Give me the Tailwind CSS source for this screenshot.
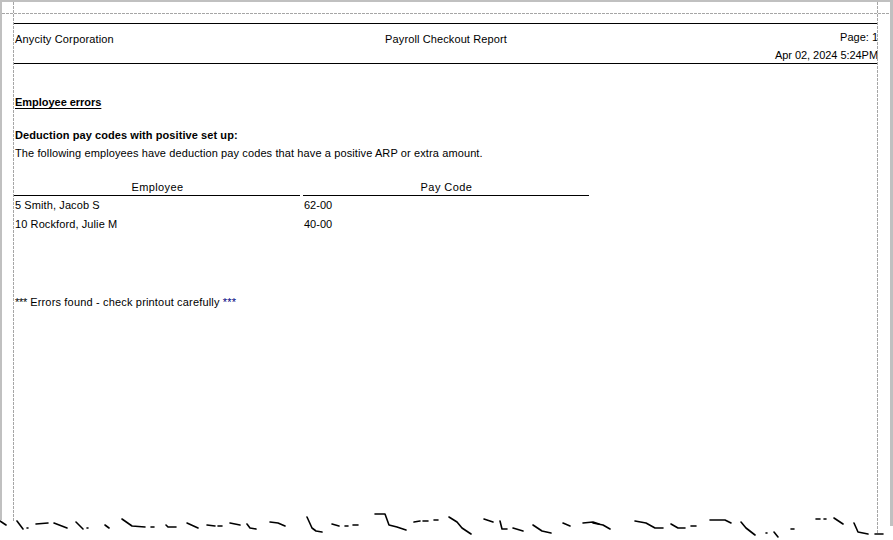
<!DOCTYPE html>
<html lang="en">
  <head>
    <meta charset="UTF-8" />
    <title>Payroll Checkout Report</title>
    <script src="https://cdn.jsdelivr.net/npm/@tailwindcss/browser@4"></script>
  </head>
  <body class="bg-white overflow-hidden">
    <div class="relative w-[893px] h-[540px] overflow-hidden font-['Liberation_Sans',Arial,sans-serif] text-[11px] leading-[14px] text-black">
      <!-- report -->
      <div class="w-[864px] ml-[14px] pt-[23px]">
        <div class="h-[41px] border-y border-black grid grid-cols-[1fr_auto_1fr]">
          <div class="pl-px pt-[8px] tracking-[0.15px]">Anycity Corporation</div>
          <div class="pt-[8px] tracking-[0.11px]">Payroll Checkout Report</div>
          <div class="text-right tracking-[0px]">
            <div class="pt-[6px]">Page: 1</div>
            <div class="pt-[4px] tracking-[-0.05px]">Apr 02, 2024 5:24PM</div>
          </div>
        </div>

        <div class="pl-px pt-[31px] font-bold underline underline-offset-2 tracking-[-0.03px]">Employee errors</div>
        <div class="pl-px pt-[19px] font-bold tracking-[0.08px]">Deduction pay codes with positive set up:</div>
        <div class="pl-px pt-[4px] tracking-[0.11px]">The following employees have deduction pay codes that have a positive ARP or extra amount.</div>

        <div class="pt-[20px] grid grid-cols-[286px_286px] gap-x-[3px] w-[575px]">
          <div class="h-[16px] pl-px border-b border-black text-center tracking-[0.4px]">Employee</div>
          <div class="h-[16px] pl-px border-b border-black text-center tracking-[0.45px]">Pay Code</div>
          <div class="pl-px pt-[2px] h-[18px] tracking-[0.1px]">5 Smith, Jacob S</div>
          <div class="pl-[1px] pt-[2px] h-[18px]">62-00</div>
          <div class="pl-px pt-[3px] h-[20px] tracking-[0.1px]">10 Rockford, Julie M</div>
          <div class="pl-[1px] pt-[3px] h-[20px]">40-00</div>
        </div>

        <div class="pl-px pt-[61px] tracking-[0.17px]"><span class="tracking-[-0.3px]">***</span> Errors found - check printout carefully <span class="text-[#000080]">***</span></div>
      </div>

      <!-- preview edge + margin guides -->
      <div class="absolute left-0 top-0 w-[893px] h-[2px] bg-[#c0c0c0]"></div>
      <div class="absolute left-0 top-0 w-[2px] h-[520px] bg-[#c0c0c0]"></div>
      <div class="absolute left-[890px] top-0 w-[3px] h-[526px] bg-[#c0c0c0]"></div>
      <svg class="absolute left-0 top-0" width="893" height="540" fill="none">
        <g stroke="#a6a6a6" stroke-dasharray="3 1">
          <path d="M2 13.5H890" />
          <path d="M13.5 2V521" />
          <path d="M877.5 2V534" />
        </g>
        <!-- torn paper -->
        <g stroke="#000" stroke-width="1.6" stroke-linejoin="round" stroke-linecap="round">
          <path d="M0 521L6 525M17 521L23 529M27 528h1M36 524L48 523M54 523L67 528M76 522L83 529M87 528h1M105 525L109 528M122 519L132 526L145 527M151 527h3M166 525L168 527L176 527M187 523L198 528M207 525L215 526M218 526h4M230 523L240 525M247 524L250 528L256 529M270 522L278 523L285 526" />
          <path d="M307 517L312 528L316 531L322 532M332 524L339 526M345 526h3M353 525h5M375 514H385L389 525L397 527L406 530M414 522L420 521M423 521h5M434 520h4M449 517L457 522L462 528L471 534M484 519L493 522M500 521L502 529L507 529M513 528L523 531M533 525L542 531L551 533M563 523L570 526M583 523L593 522L599 524" />
          <path d="M593 523L603 525L610 529M635 521L646 523L655 528L663 528M671 524L678 528L685 528M691 526h5M710 520H725L731 523M741 522L746 528L755 535M766 533h1M774 532L778 537M791 529h3M816 519h4M824 519h2M834 518L843 524M854 523L858 532L868 534M875 534h8" />
        </g>
      </svg>
    </div>
  </body>
</html>
